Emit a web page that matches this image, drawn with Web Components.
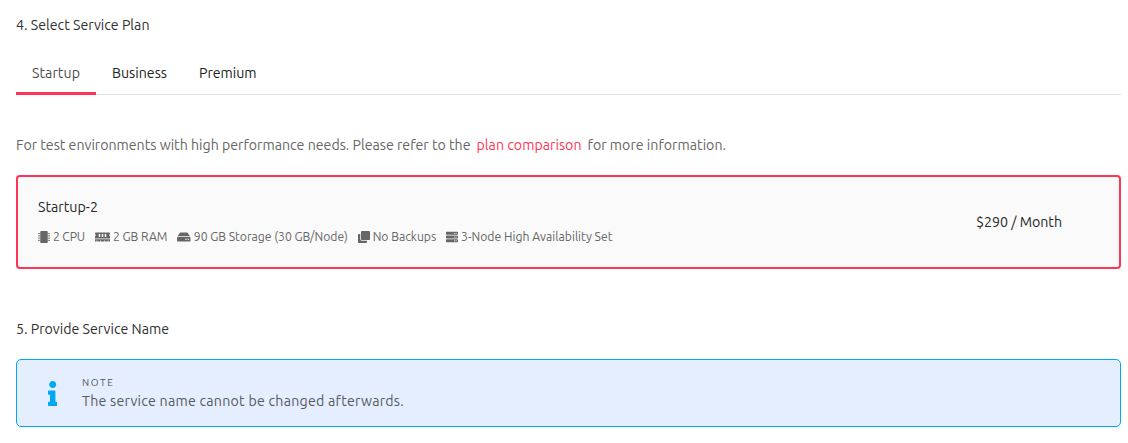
<!DOCTYPE html>
<html lang="en">
<head>
<meta charset="utf-8">
<title>Service plan</title>
<style>
body{margin:0;background:#fff;font-family:Ubuntu,"Noto Sans",sans-serif;font-size:14.2px;line-height:20px;color:#303030}
</style>
</head>
<body>
<service-form></service-form>
<script>
const define = (name, html, setup) => {
  const t = document.createElement('template');
  t.innerHTML = html;
  customElements.define(name, class extends HTMLElement {
    connectedCallback() {
      if (this.shadowRoot) return;
      this.attachShadow({mode: 'open'}).append(t.content.cloneNode(true));
      if (setup) setup(this, this.shadowRoot);
    }
  });
};

// A single line of text, tracked so that it fills the given measure.
define('fit-text', `<style>:host{display:inline-block;white-space:nowrap}span{display:inline-block}</style><span><slot></slot></span>`, (el, root) => {
  const span = root.querySelector('span');
  const width = Number(el.getAttribute('width'));
  const count = el.textContent.length;
  span.style.letterSpacing = '0px';
  const natural = span.getBoundingClientRect().width;
  span.style.letterSpacing = ((width - natural) / count).toFixed(4) + 'px';
  el.style.width = width + 'px';
});

const unit = y => `M480 ${y+128}H32c-17.673 0-32-14.327-32-32V${y+32}c0-17.673 14.327-32 32-32h448c17.673 0 32 14.327 32 32v64c0 17.673-14.327 32-32 32zm-48-88c-13.255 0-24 10.745-24 24s10.745 24 24 24 24-10.745 24-24-10.745-24-24-24zm-64 0c-13.255 0-24 10.745-24 24s10.745 24 24 24 24-10.745 24-24-10.745-24-24-24z`;
const pins = [88, 184, 280, 376].map(y => `M440 ${y}h42a6 6 0 0 1 6 6v6h18a6 6 0 0 1 6 6v12a6 6 0 0 1-6 6h-18v6a6 6 0 0 1-6 6h-42zM72 ${y}H30a6 6 0 0 0-6 6v6H6a6 6 0 0 0-6 6v12a6 6 0 0 0 6 6h18v6a6 6 0 0 0 6 6h42z`).join('');
const icons = {
  cpu: [512, 'M416 48v416c0 26.51-21.49 48-48 48H144c-26.51 0-48-21.49-48-48V48c0-26.51 21.49-48 48-48h224c26.51 0 48 21.49 48 48z' + pins],
  memory: [640, 'M640 130.94V96c0-17.67-14.33-32-32-32H32C14.33 64 0 78.33 0 96v34.94c18.6 6.61 32 24.19 32 45.06s-13.4 38.45-32 45.06V320h640v-98.94c-18.6-6.61-32-24.19-32-45.06s13.4-38.45 32-45.06zM224 256h-64V128h64v128zm128 0h-64V128h64v128zm128 0h-64V128h64v128zM0 448h64v-26.67c0-8.84 7.16-16 16-16s16 7.16 16 16V448h128v-26.67c0-8.84 7.16-16 16-16s16 7.16 16 16V448h128v-26.67c0-8.84 7.16-16 16-16s16 7.16 16 16V448h128v-26.67c0-8.84 7.16-16 16-16s16 7.16 16 16V448h64v-96H0v96z'],
  disk: [576, 'M576 304v96c0 26.51-21.49 48-48 48H48c-26.51 0-48-21.49-48-48v-96c0-26.51 21.49-48 48-48h480c26.51 0 48 21.49 48 48zm-48-80a79.557 79.557 0 0 1 30.777 6.165L462.25 85.374A48.003 48.003 0 0 0 422.311 64H153.689a48 48 0 0 0-39.938 21.374L17.223 230.165A79.557 79.557 0 0 1 48 224h480zm-48 96c-17.673 0-32 14.327-32 32s14.327 32 32 32 32-14.327 32-32-14.327-32-32-32zm-96 0c-17.673 0-32 14.327-32 32s14.327 32 32 32 32-14.327 32-32-14.327-32-32-32z'],
  clone: [512, 'M464 0c26.51 0 48 21.49 48 48v288c0 26.51-21.49 48-48 48H176c-26.51 0-48-21.49-48-48V48c0-26.51 21.49-48 48-48h288zM176 416c-44.112 0-80-35.888-80-80V128H48c-26.51 0-48 21.49-48 48v288c0 26.51 21.49 48 48 48h288c26.51 0 48-21.49 48-48v-48H176z'],
  server: [512, unit(32) + unit(192) + unit(352)],
  info: [192, 'M20 424.229h20V279.771H20c-11.046 0-20-8.954-20-20V212c0-11.046 8.954-20 20-20h112c11.046 0 20 8.954 20 20v212.229h20c11.046 0 20 8.954 20 20V492c0 11.046-8.954 20-20 20H20c-11.046 0-20-8.954-20-20v-47.771c0-11.046 8.954-20 20-20zM96 0C56.235 0 24 32.235 24 72s32.235 72 72 72 72-32.235 72-72S135.764 0 96 0z']
};
define('ui-icon', `<style>:host{display:block;flex:none}svg{display:block;height:1em;fill:currentColor}</style><svg><path/></svg>`, (el, root) => {
  const [w, d] = icons[el.getAttribute('name')];
  const svg = root.querySelector('svg');
  svg.setAttribute('viewBox', `0 0 ${w} 512`);
  svg.style.width = w / 512 + 'em';
  svg.querySelector('path').setAttribute('d', d);
});

define('plan-tab', `<style>
:host{display:block;box-sizing:border-box;height:43px;padding:11px 16px 0;color:#222;border-bottom:3px solid transparent;margin-bottom:-1px}
:host([selected]){color:#4d4d4d;border-color:#ff3554}
</style><slot></slot>`);

define('plan-tabs', `<style>:host{display:flex;border-bottom:1px solid #dcdcdc}</style><slot></slot>`);

define('plan-spec', `<style>
:host{display:flex;align-items:center;font-size:12.2px;line-height:18px;color:#666;gap:3px}
::slotted(ui-icon){font-size:12px}
</style><slot name="icon"></slot><slot></slot>`);

define('plan-card', `<style>
:host{display:flex;box-sizing:border-box;height:94px;border:2px solid #ff3554;border-radius:4px;background:#fafafa;padding:0 57px 0 20px;align-items:center;justify-content:space-between;color:#262626}
.main{display:flex;flex-direction:column;gap:11px;padding-bottom:1px}
.specs{display:flex;gap:9.9px}
</style><div class="main"><slot name="title"></slot><div class="specs"><slot></slot></div></div><slot name="price"></slot>`);

define('note-box', `<style>
:host{display:flex;box-sizing:border-box;height:68px;border:1px solid #00a8f3;border-radius:5px;background:#e5eeff;align-items:center;padding-left:31px;color:#555b60}
ui-icon{font-size:25px;color:#00a8f3;width:34px}
.label{font-size:10px;line-height:14px;display:block;color:#50565b;margin-bottom:1px}
</style><ui-icon name="info"></ui-icon><div><span class="label"><slot name="label"></slot></span><slot></slot></div>`);

define('service-form', `<style>
:host{display:flex;flex-direction:column;padding:15px 7px 16px 16px}
.heading{height:20px}
plan-tabs{margin-top:17px}
.desc{margin-top:40px;display:flex;color:#666}
.link{color:#ff3554;margin:0 6px}
plan-card{margin-top:20px}
.second{margin-top:50px}
note-box{margin-top:20px}
</style>
<div class="heading"><fit-text width="133.5">4. Select Service Plan</fit-text></div>
<plan-tabs>
<plan-tab selected><fit-text width="48">Startup</fit-text></plan-tab>
<plan-tab><fit-text width="55">Business</fit-text></plan-tab>
<plan-tab><fit-text width="57.5">Premium</fit-text></plan-tab>
</plan-tabs>
<div class="desc"><fit-text width="454.5">For test environments with high performance needs. Please refer to the</fit-text><fit-text class="link" width="105">plan comparison</fit-text><fit-text width="138.5">for more information.</fit-text></div>
<plan-card>
<fit-text slot="title" width="60">Startup-2</fit-text>
<plan-spec><ui-icon slot="icon" name="cpu"></ui-icon><fit-text width="32">2 CPU</fit-text></plan-spec>
<plan-spec><ui-icon slot="icon" name="memory"></ui-icon><fit-text width="54.5">2 GB RAM</fit-text></plan-spec>
<plan-spec><ui-icon slot="icon" name="disk"></ui-icon><fit-text width="154">90 GB Storage (30 GB/Node)</fit-text></plan-spec>
<plan-spec><ui-icon slot="icon" name="clone"></ui-icon><fit-text width="63.5">No Backups</fit-text></plan-spec>
<plan-spec><ui-icon slot="icon" name="server"></ui-icon><fit-text width="151.5">3-Node High Availability Set</fit-text></plan-spec>
<fit-text slot="price" width="86">$290 / Month</fit-text>
</plan-card>
<div class="heading second"><fit-text width="153">5. Provide Service Name</fit-text></div>
<note-box><fit-text slot="label" width="32.5">NOTE</fit-text><fit-text width="322">The service name cannot be changed afterwards.</fit-text></note-box>`);
</script>
</body>
</html>
